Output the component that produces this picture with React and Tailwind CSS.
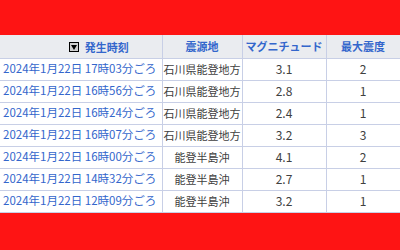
export default function App() {
  const rows = [
    ["2024年1月22日 17時03分ごろ", "石川県能登地方", "3.1", "2"],
    ["2024年1月22日 16時56分ごろ", "石川県能登地方", "2.8", "1"],
    ["2024年1月22日 16時24分ごろ", "石川県能登地方", "2.4", "1"],
    ["2024年1月22日 16時07分ごろ", "石川県能登地方", "3.2", "3"],
    ["2024年1月22日 16時00分ごろ", "能登半島沖", "4.1", "2"],
    ["2024年1月22日 14時32分ごろ", "能登半島沖", "2.7", "1"],
    ["2024年1月22日 12時09分ごろ", "能登半島沖", "3.2", "1"],
  ];
  const font = { fontFamily: '"Noto Sans CJK JP", "Noto Sans", sans-serif' };
  return (
    <div className="w-[400px] h-[250px] bg-[#fe1414] flex flex-col overflow-hidden" style={font}>
      <div className="h-[35px] shrink-0" />
      <div className="bg-white">
        <table className="border-collapse w-[400px] table-fixed text-[11px] leading-none">
          <colgroup>
            <col className="w-[162px]" />
            <col className="w-[80px]" />
            <col className="w-[84px]" />
            <col className="w-[74px]" />
          </colgroup>
          <thead>
            <tr className="h-[23px] bg-[#eaecf0]">
              <th className="border border-[#c8cfe6] border-t-0 border-l-0 font-bold text-[#3366cc] pl-[36px]">
                <span className="inline-flex items-center gap-[6px]">
                  <span className="w-[10px] h-[10px] border border-black bg-[#d0d0d0] flex items-center justify-center">
                    <svg width="6" height="5" viewBox="0 0 6 5"><path d="M0 0 L6 0 L3 5 Z" fill="#000" /></svg>
                  </span>
                  発生時刻
                </span>
              </th>
              <th className="border border-[#c8cfe6] border-t-0 font-bold text-[#3366cc] text-center whitespace-nowrap">震源地</th>
              <th className="border border-[#c8cfe6] border-t-0 font-bold text-[#3366cc] text-center whitespace-nowrap">マグニチュード</th>
              <th className="border border-[#c8cfe6] border-t-0 font-bold text-[#3366cc] text-center whitespace-nowrap">最大震度</th>
            </tr>
          </thead>
          <tbody>
            {rows.map((r, i) => (
              <tr key={i} className="h-[22px]">
                <td className="border border-[#c8cfe6] border-l-0 text-[#3366cc] pl-[3px] whitespace-nowrap text-[11.5px]">{r[0]}</td>
                <td className="border border-[#c8cfe6] text-[#404040] text-center whitespace-nowrap">{r[1]}</td>
                <td className="border border-[#c8cfe6] text-[#404040] text-center text-[12px]">{r[2]}</td>
                <td className="border border-[#c8cfe6] text-[#404040] text-center text-[12px]">{r[3]}</td>
              </tr>
            ))}
          </tbody>
        </table>
      </div>
      <div className="flex-1" />
    </div>
  );
}
